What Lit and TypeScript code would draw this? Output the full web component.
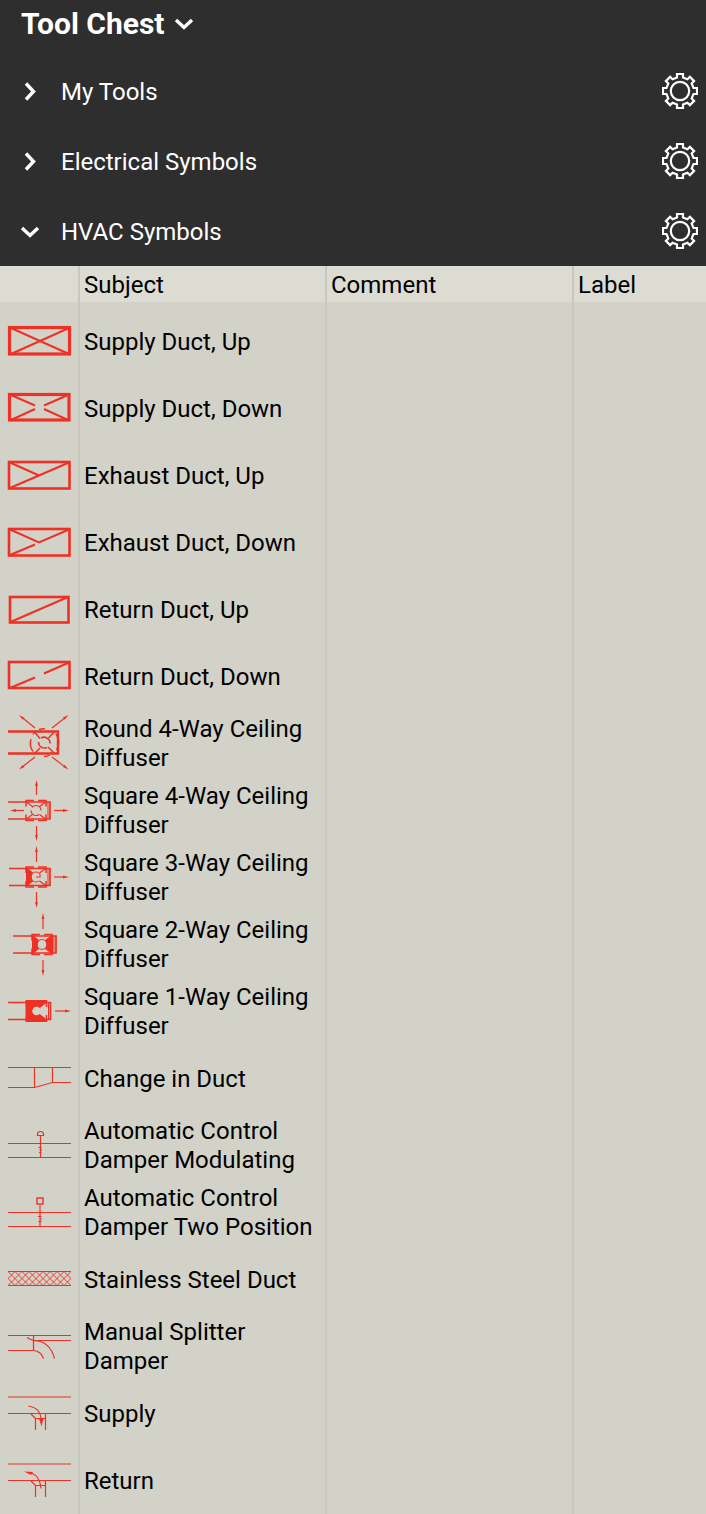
import { LitElement, html, css, svg } from "lit";
import { customElement } from "lit/decorators.js";

const frame = (x: number, y: number, w: number, h: number, sw: number) =>
  svg`<rect x=${x} y=${y} width=${w} height=${h} stroke-width=${sw}/>`;

// Thin air-flow arrow with a slender filled head.
const arrow = (x1: number, y1: number, x2: number, y2: number) => {
  const len = Math.hypot(x2 - x1, y2 - y1);
  const ux = (x2 - x1) / len;
  const uy = (y2 - y1) / len;
  const bx = x2 - ux * 6;
  const by = y2 - uy * 6;
  return svg`<path stroke-width="1.2" d="M${x1} ${y1}L${bx} ${by}"/>
    <path class="solid" d="M${x2} ${y2}L${bx - uy * 1.4} ${by + ux * 1.4}L${bx + uy * 1.4} ${by - ux * 1.4}Z"/>`;
};

// Square diffuser: duct, dashed neck and round core; the listed sides are blanked off.
const diffuser = (cx: number, cy: number, ductLeft: number, solid: string) => {
  const l = cx - 10, r = cx + 10, t = cy - 10, b = cy + 10;
  return svg`
    <path stroke-width="1.7" d="M${ductLeft} ${cy - 8.5}H${cx + 14}V${cy + 8.5}H${ductLeft}"/>
    <path stroke-width="1" d="M${cx + 12} ${cy - 8}V${cy + 8}"/>
    ${solid.includes("l") ? svg`<path class="solid" d="M${l} ${t}L${cx - 3.5} ${cy - 4.5}V${cy + 4.5}L${l} ${b}Z"/>` : ""}
    ${solid.includes("r") ? svg`<path class="solid" d="M${r + 1} ${t}L${cx + 3.5} ${cy - 4.5}V${cy + 4.5}L${r + 1} ${b}Z"/>` : ""}
    ${solid.includes("t") ? svg`<path class="solid" d="M${l - 1} ${t - 1}H${r + 1}L${cx + 3} ${cy - 3}L${cx} ${cy}L${cx + 3} ${cy + 3}L${r + 1} ${b + 1}H${l - 1}Z"/>` : ""}
    <path stroke-width="1.5" d="M${cx - 2} ${t}H${l}V${cy - 4}M${cx + 2} ${t}H${r}V${cy - 4}M${l} ${cy + 4}V${b}H${cx - 2}M${cx + 2} ${b}H${r}V${cy + 4}"/>
    <path stroke-width="1.2" d="M${l + 1} ${t + 2}L${cx - 3.5} ${cy - 4}M${r - 1} ${t + 2}L${cx + 3.5} ${cy - 4}M${l + 1} ${b - 2}L${cx - 3.5} ${cy + 4}M${r - 1} ${b - 2}L${cx + 3.5} ${cy + 4}"/>
    ${solid
      ? svg`<circle cx=${cx} cy=${cy} r="4.4" class="core"/><path stroke-width="1" d="M${cx + 4} ${cy - 3}A5 5 0 1 0 ${cx + 3} ${cy + 4}"/>`
      : svg`<path stroke-width="1.1" d="M${cx - 4} ${cy - 3}A5 5 0 0 1 ${cx + 5} ${cy}M${cx + 3} ${cy + 4}A5 5 0 0 1 ${cx - 5} ${cy}"/>`}
    ${solid === "lr" ? svg`<path stroke-width="1" d="M${cx + 4} ${cy - 3}A5 5 0 0 1 ${cx + 3} ${cy + 4}"/>` : ""}
    ${solid === "l" ? svg`<path stroke-width="1.1" d="M${cx} ${cy}H${cx + 4}V${cy - 3}"/>` : ""}`;
};

const hatch = () => {
  let d = "";
  for (let x = -6; x < 80; x += 7) d += `M${x} 25.5l14 14M${x + 14} 25.5l-14 14`;
  return d;
};

const rows = [
  { subject: "Supply Duct, Up", art: svg`${frame(9.5, 19.5, 60, 26.5, 3.2)}<path stroke-width="2" d="M11 20L69 46M69 20L11 46"/>` },
  { subject: "Supply Duct, Down", art: svg`${frame(9.5, 19.5, 59.5, 25.5, 3.2)}<path stroke-width="2" d="M11 20L35 30.5M68 20L44 30.5M11 45L35 34M68 45L44 34"/>` },
  { subject: "Exhaust Duct, Up", art: svg`${frame(9, 20, 60.5, 26.5, 2.6)}<path stroke-width="2" d="M10 20.5L39 33.5M10 46L69 20.5"/>` },
  { subject: "Exhaust Duct, Down", art: svg`${frame(9, 20, 60.5, 26.5, 2.6)}<path stroke-width="2" d="M10 20.5L39 33.5L69 20.5M10 46L35 35.5"/>` },
  { subject: "Return Duct, Up", art: svg`${frame(10, 21, 58.5, 25.5, 2.6)}<path stroke-width="2" d="M10.5 46L68 21"/>` },
  { subject: "Return Duct, Down", art: svg`${frame(9, 19, 60.5, 26, 2.6)}<path stroke-width="2" d="M10 45L35 34.5M44 30.5L69 19.5"/>` },
  {
    subject: "Round 4-Way Ceiling Diffuser",
    art: svg`<path stroke-width="2.4" d="M8 21.5H58V43.5H8"/>
      ${arrow(35, 18, 19, 5)}${arrow(52, 18, 68.5, 5)}${arrow(35, 47, 19, 59.5)}${arrow(52, 47, 68.5, 59.5)}
      <path stroke-width="1.4" d="M33 41.5A14 14 0 0 1 31 29M33 24.5A14 14 0 0 1 36 21M39 19.5A14 14 0 0 1 45 18.8M56 24A15 15 0 0 1 56.5 40M44 46.5A14 14 0 0 0 50 45"/>
      <path stroke-width="1.5" d="M34.5 22L40 28.5M54 22L48.5 28M34.5 43.5L40 38M54 43L48 37M41 28A6 6 0 0 1 50 33.5M38.5 32A6 6 0 0 0 47 37.5"/>`,
  },
  { subject: "Square 4-Way Ceiling Diffuser", art: svg`${diffuser(36, 33.5, 8, "")}${arrow(36.5, 18, 36.5, 3)}${arrow(36.5, 49, 36.5, 64)}${arrow(24, 33.5, 10, 33.5)}${arrow(54, 33.5, 69, 33.5)}` },
  { subject: "Square 3-Way Ceiling Diffuser", art: svg`${diffuser(36, 33, 9, "l")}${arrow(36.5, 18, 36.5, 2)}${arrow(36.5, 48, 36.5, 64)}${arrow(54, 33, 69, 33)}` },
  { subject: "Square 2-Way Ceiling Diffuser", art: svg`${diffuser(42, 33.5, 13, "lr")}${arrow(43, 18, 43, 2)}${arrow(43, 49, 43, 65)}` },
  { subject: "Square 1-Way Ceiling Diffuser", art: svg`${diffuser(36.5, 33, 8, "lt")}${arrow(55, 33, 71, 33)}` },
  { subject: "Change in Duct", art: svg`<path d="M8 22.5H71M8 42.5H34.5L52.5 37.5H71M34.5 22.5V42.5M52.5 22.5V37.5"/>` },
  { subject: "Automatic Control Damper Modulating", art: svg`<path d="M8 31.5H71M8 45.5H71M40.5 23.5V45.5M37.5 23.5V22A3 2.5 0 0 1 43.5 22V23.5ZM38.5 35.5H41.5M39.5 38H42M39 40.5H41.5"/>` },
  { subject: "Automatic Control Damper Two Position", art: svg`<path d="M8 33.5H71M8 47.5H71M40 26V47.5M38 37.5H41.5M39.5 40H42M38.5 42.5H41.5"/><rect x="37" y="19" width="6" height="6" stroke-width="1.4"/>` },
  { subject: "Stainless Steel Duct", art: svg`<svg x="8" width="63" height="67" viewBox="8 0 63 67"><path stroke-width="0.9" d=${hatch()}/></svg><path d="M8 25.5H71M8 39.5H71"/>` },
  { subject: "Manual Splitter Damper", art: svg`<path d="M8 22.5H71M33.5 27.5H71M33.5 22.5V37.5M8 37.5H33.5Q41 38 43.5 45.5M27 24.5Q30 26.5 33.5 27.5Q50 28 54.5 45.5"/>` },
  { subject: "Supply", art: svg`<path d="M8 17H71M8 33.5H71M45.5 33.5V50M35.5 50V38.5H45.5M31 34L35.5 38.5M28.5 26Q41 28 41 40"/><path class="solid" d="M39 38.5H43.5L41.5 46.5Z"/>` },
  { subject: "Return", art: svg`<path d="M8 17H71M8 33.5H71M45.5 33.5V50M35.5 50V38.5H45.5M31 34L35.5 38.5M31 26Q40 29 41 41.5"/><path class="solid" d="M24 24.5L33 25L31 28Z"/>` },
];

const down = html`<svg class="chev" viewBox="0 0 20 20"><path d="M2 7L10 14.5L18 7"/></svg>`;
const right = html`<svg class="chev" viewBox="0 0 20 20"><path d="M6 2.5L13.5 10.5L6 18.5"/></svg>`;

const gearPath = (() => {
  const pts: string[] = [];
  for (let i = 0; i < 8; i++) {
    const a = (i * Math.PI) / 4;
    const c = Math.cos(a), s = Math.sin(a);
    for (const [r, o] of [[13.5, -3], [17, -3], [17, 3], [13.5, 3]]) {
      pts.push(`${(18 + r * c - o * s).toFixed(1)} ${(18 + r * s + o * c).toFixed(1)}`);
    }
  }
  return `M${pts.join("L")}Z`;
})();
const gear = html`<svg class="gear" viewBox="0 0 36 36"><path d=${gearPath}/><circle cx="18" cy="18" r="9.2"/></svg>`;

@customElement("app-root")
export class AppRoot extends LitElement {
  static styles = css`
    :host {
      display: block;
      min-height: 100vh;
      background: #d2d2c8;
      color: #000;
      font-family: Roboto, sans-serif;
      font-size: 24px;
      line-height: 29px;
    }
    .top { background: #2e2e2e; color: #fff; }
    h1, h2 { margin: 0; font: inherit; }
    button {
      display: flex;
      align-items: center;
      margin: 0;
      padding: 0;
      border: 0;
      background: none;
      color: inherit;
      font: inherit;
      cursor: pointer;
    }
    svg { display: block; flex: none; fill: none; }
    .title { height: 56px; padding: 0 20px 10px 21px; box-sizing: border-box; display: flex; align-items: center; }
    .title button { gap: 9px; font-size: 30px; font-weight: 700; }
    .set { display: flex; align-items: center; justify-content: space-between; height: 70px; padding: 0 8px 0 20px; }
    .set .toggle { gap: 21px; }
    .set .toggle span { padding-top: 2px; }
    .chev { width: 20px; height: 20px; stroke: #fff; stroke-width: 3.4; }
    .gear { width: 36px; height: 36px; stroke: #fff; stroke-width: 2.2; }
    table { width: 100%; border-collapse: separate; border-spacing: 0; table-layout: fixed; }
    .c-icon { width: 80px; }
    .c-text { width: 247px; }
    th { height: 36px; padding: 2px 4px 0; font-weight: 400; text-align: left; background: #dcdcd3; }
    td { height: 67px; padding: 1px 4px 0; }
    th, td { border-right: 2px solid #c8c8bf; box-sizing: border-box; }
    th:last-child, td:last-child { border-right: 0; }
    .gap td { height: 6px; }
    td.icon { padding: 0; }
    .art { width: 78px; height: 67px; stroke: #ee3124; stroke-width: 1.2; }
    .solid { fill: #ee3124; stroke: none; }
    .core { fill: #d2d2c8; stroke: none; }
  `;

  private set(name: string, open: boolean) {
    return html`<div class="set">
      <h2><button class="toggle" aria-expanded=${open ? "true" : "false"}>${open ? down : right}<span>${name}</span></button></h2>
      <button aria-label="${name} settings">${gear}</button>
    </div>`;
  }

  render() {
    return html`
      <header class="top">
        <div class="title"><h1><button>Tool Chest ${down}</button></h1></div>
        ${this.set("My Tools", false)}${this.set("Electrical Symbols", false)}${this.set("HVAC Symbols", true)}
      </header>
      <table>
        <colgroup><col class="c-icon" /><col class="c-text" /><col class="c-text" /><col /></colgroup>
        <thead><tr><th></th><th>Subject</th><th>Comment</th><th>Label</th></tr></thead>
        <tbody>
          <tr class="gap"><td></td><td></td><td></td><td></td></tr>
          ${rows.map(
            (r) => html`<tr>
              <td class="icon"><svg class="art" viewBox="0 0 78 67">${r.art}</svg></td>
              <td>${r.subject}</td><td></td><td></td>
            </tr>`
          )}
        </tbody>
      </table>
    `;
  }
}
